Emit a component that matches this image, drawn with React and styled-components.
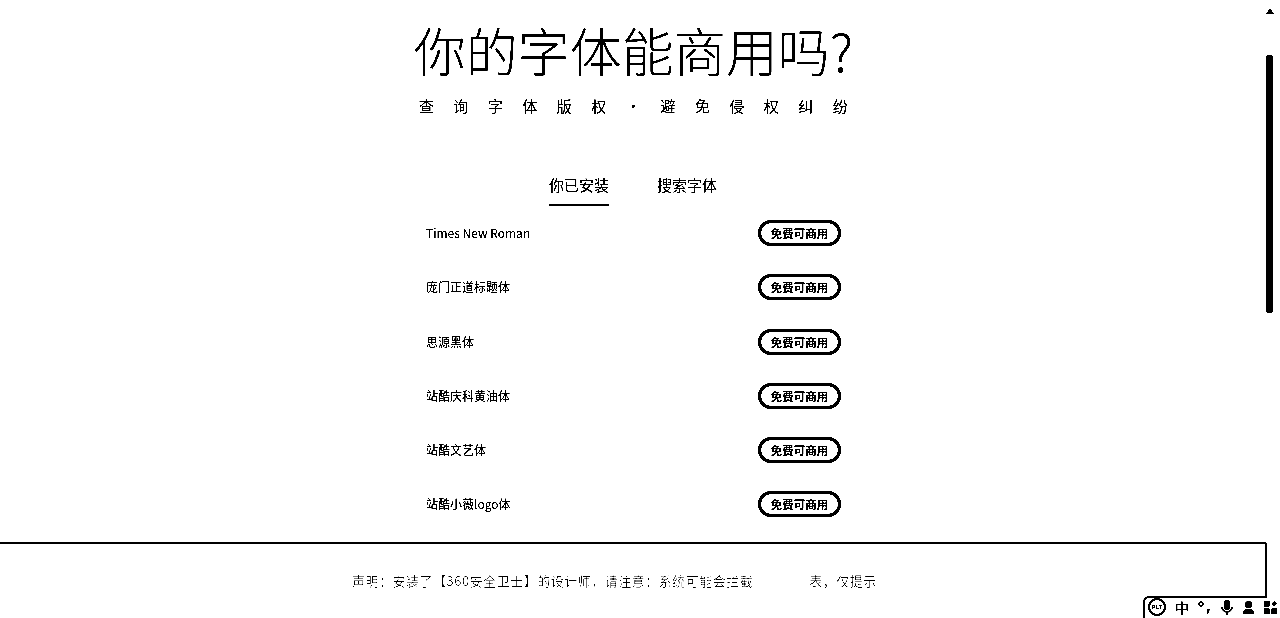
import React from 'react'
import styled, { createGlobalStyle } from 'styled-components'

const GlobalStyle = createGlobalStyle`
  html, body { margin: 0; padding: 0; height: 100%; overflow: hidden; background: #fff; }
  body { font-family: "Liberation Sans", "Noto Sans CJK SC", sans-serif; color: #000; }
`

const Screen = styled.div`
  position: relative;
  width: 1280px;
  height: 618px;
  overflow: hidden;
  background: #fff;
  filter: grayscale(1) brightness(0.85) contrast(1000%);
`

const Main = styled.main`
  width: 1267px;
  display: flex;
  flex-direction: column;
  align-items: center;
`

const Title = styled.h1`
  margin: 18px 0 0;
  height: 64px;
  font: 300 52px/64px "Noto Sans CJK SC", sans-serif;
  white-space: nowrap;
`

const Subtitle = styled.p`
  margin: 12px 0 0;
  padding-left: 19px;
  height: 24px;
  font: 400 15px/24px "Noto Sans CJK SC", sans-serif;
  letter-spacing: 19.5px;
  white-space: nowrap;
`

const Tabs = styled.div`
  display: flex;
  gap: 48px;
  margin-top: 52px;
  padding-right: 1px;
`

const Tab = styled.div`
  width: 60px;
  height: 34px;
  font: 400 15px/30px "Noto Sans CJK SC", sans-serif;
  white-space: nowrap;
  border-bottom: 2px solid ${props => (props.$active ? '#000' : 'transparent')};
`

const List = styled.ul`
  list-style: none;
  margin: 0;
  padding: 0;
  width: 415px;
`

const Row = styled.li`
  height: 54.25px;
  display: flex;
  align-items: center;
  justify-content: space-between;
`

const FontName = styled.span`
  font: 400 12px/16px "Noto Sans CJK SC", sans-serif;
`

const Pill = styled.span`
  box-sizing: border-box;
  width: 83px;
  height: 26px;
  display: flex;
  align-items: center;
  justify-content: center;
  border: 3px solid #000;
  border-radius: 13px;
  font: 700 11.5px/16px "Noto Sans CJK SC", sans-serif;
  background: #fff;
`

const Notice = styled.div`
  position: absolute;
  left: 0;
  top: 542px;
  width: 1267px;
  height: 55px;
  box-sizing: border-box;
  border-top: 2px solid #000;
  border-right: 2px solid #000;
  border-top-right-radius: 3px;
  background: #fff;
  display: flex;
  align-items: center;
  padding: 20px 0 0 352px;
  font: 400 13px/16px "Noto Sans CJK SC", sans-serif;
  letter-spacing: 0.5px;
  color: #777;
  white-space: nowrap;
`

const NoticeGap = styled.span`
  display: inline-block;
  width: 56px;
`

const Scrollbar = styled.div`
  position: absolute;
  top: 0;
  right: 0;
  width: 14px;
  height: 618px;
`

const ScrollArrow = styled.div`
  position: absolute;
  top: 8px;
  left: 0;
  width: 0;
  height: 0;
  border-left: 4px solid transparent;
  border-right: 4px solid transparent;
  border-bottom: 6px solid #000;
`

const ScrollThumb = styled.div`
  position: absolute;
  top: 55px;
  left: 0;
  width: 7px;
  height: 258px;
  border-radius: 3px;
  background: #000;
`

const Tray = styled.div`
  position: absolute;
  left: 1143px;
  top: 596px;
  width: 137px;
  height: 22px;
  box-sizing: border-box;
  display: flex;
  align-items: center;
  gap: 9px;
  padding-left: 5px;
  background: #fff;

  &::before {
    content: '';
    position: absolute;
    left: 0;
    top: 0;
    width: 124px;
    height: 22px;
    box-sizing: border-box;
    border-top: 2px solid #000;
    border-left: 2px solid #000;
    border-top-left-radius: 6px;
  }
`

const TrayBadge = styled.span`
  box-sizing: border-box;
  width: 18px;
  height: 18px;
  border: 2px solid #000;
  border-radius: 50%;
  display: flex;
  align-items: center;
  justify-content: center;
  font: 700 6px/1 "Liberation Sans", sans-serif;
`

const TrayText = styled.span`
  font: 400 14px/18px "Noto Sans CJK SC", sans-serif;
`

const fonts = ['Times New Roman', '庞门正道标题体', '思源黑体', '站酷庆科黄油体', '站酷文艺体', '站酷小薇logo体']

const Punct = () => (
  <svg width="14" height="14" viewBox="0 0 14 14">
    <circle cx="3" cy="4" r="2" fill="none" stroke="#000" strokeWidth="1.4" />
    <path d="M9 9h3l-2 5H9z" fill="#000" />
  </svg>
)

const Mic = () => (
  <svg width="12" height="15" viewBox="0 0 12 15">
    <rect x="3" y="0" width="6" height="10" rx="3" fill="#000" />
    <path d="M1 7a5 5 0 0 0 10 0M6 12v3" fill="none" stroke="#000" strokeWidth="1.5" />
  </svg>
)

const Person = () => (
  <svg width="13" height="13" viewBox="0 0 13 13">
    <circle cx="6.5" cy="3.5" r="3.5" fill="#000" />
    <path d="M1 13v-2c0-2 2-3 5.500-3s5.500 1 5.500 3v2z" fill="#000" />
  </svg>
)

const Grid = () => (
  <svg width="13" height="13" viewBox="0 0 13 13">
    <rect x="0" y="0" width="5.500" height="5.500" fill="#000" />
    <rect x="0" y="7.500" width="5.500" height="5.500" fill="#000" />
    <rect x="7.500" y="7.500" width="5.500" height="5.500" fill="#000" />
    <path d="M10.200 0l2.800 2.800-2.800 2.800-2.800-2.800z" fill="#000" />
  </svg>
)

export default function App() {
  return (
    <Screen>
      <GlobalStyle />
      <Main>
        <Title>你的字体能商用吗?</Title>
        <Subtitle>查询字体版权・避免侵权纠纷</Subtitle>
        <Tabs>
          <Tab $active>你已安装</Tab>
          <Tab>搜索字体</Tab>
        </Tabs>
        <List>
          {fonts.map(name => (
            <Row key={name}>
              <FontName>{name}</FontName>
              <Pill>免费可商用</Pill>
            </Row>
          ))}
        </List>
      </Main>
      <Notice>
        声明：安装了【360安全卫士】的设计师，请注意：系统可能会拦截<NoticeGap />表，仅提示
      </Notice>
      <Scrollbar>
        <ScrollArrow />
        <ScrollThumb />
      </Scrollbar>
      <Tray>
        <TrayBadge>PLT</TrayBadge>
        <TrayText>中</TrayText>
        <Punct />
        <Mic />
        <Person />
        <Grid />
      </Tray>
    </Screen>
  )
}
